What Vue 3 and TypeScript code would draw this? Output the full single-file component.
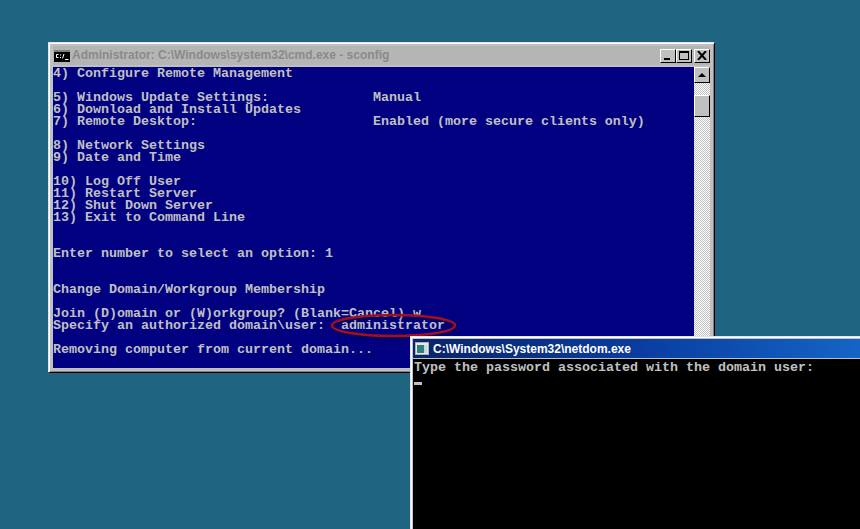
<script setup lang="ts">
const blueLines: string[] = [
  '4) Configure Remote Management',
  '',
  '5) Windows Update Settings:             Manual',
  '6) Download and Install Updates',
  '7) Remote Desktop:                      Enabled (more secure clients only)',
  '',
  '8) Network Settings',
  '9) Date and Time',
  '',
  '10) Log Off User',
  '11) Restart Server',
  '12) Shut Down Server',
  '13) Exit to Command Line',
  '',
  '',
  'Enter number to select an option: 1',
  '',
  '',
  'Change Domain/Workgroup Membership',
  '',
  'Join (D)omain or (W)orkgroup? (Blank=Cancel) w',
  'Specify an authorized domain\\user:  administrator',
  '',
  'Removing computer from current domain...',
]
</script>

<template>
  <div class="desktop">
    <section class="win win-back">
      <header class="title title-inactive">
        <svg class="icon" width="16" height="12" viewBox="0 0 16 12">
          <rect width="16" height="12" fill="#000" />
          <rect x="0" y="0" width="16" height="2" fill="#808080" />
          <path d="M4.500 4.500h-2v3h2M6.500 4.500v1M6.500 7v1M10 4l-1.500 4.500M11 9.500h3.500" stroke="#fff" stroke-width="1" fill="none" />
        </svg>
        <span class="title-text">Administrator: C:\Windows\system32\cmd.exe - sconfig</span>
        <span class="btn"><i class="min"></i></span>
        <span class="btn"><i class="max"></i></span>
        <span class="btn btn-close">
          <svg width="10" height="9" viewBox="0 0 10 9"><path d="M1 0l8 9M9 0l-8 9" stroke="#000" stroke-width="2" fill="none" /></svg>
        </span>
      </header>
      <div class="body">
        <pre class="console console-blue">{{ blueLines.join('\n') }}</pre>
        <div class="scroll">
          <span class="arrow"><i class="tri"></i></span>
          <span class="thumb"></span>
        </div>
      </div>
    </section>

    <svg class="ellipse" width="130" height="30" viewBox="0 0 130 30">
      <ellipse cx="63.500" cy="14.500" rx="61.500" ry="10.500" fill="none" stroke="#a50f1c" stroke-width="2.500" />
    </svg>

    <section class="win win-front">
      <header class="title title-active">
        <svg class="icon" width="14" height="13" viewBox="0 0 14 13">
          <rect x="0.500" y="0.500" width="13" height="12" fill="#e8e8e8" stroke="#a8b4b4" />
          <rect x="2" y="3" width="7" height="8" fill="#2f7f7a" />
          <rect x="9" y="3" width="3" height="8" fill="#cfd6d6" />
        </svg>
        <span class="title-text">C:\Windows\System32\netdom.exe</span>
      </header>
      <pre class="console console-black">Type the password associated with the domain user:
<i class="cursor"></i></pre>
    </section>
  </div>
</template>

<style>
html, body { margin: 0; background: #1f6480; }
</style>

<style scoped>
.desktop {
  position: relative;
  width: 860px;
  height: 529px;
  overflow: hidden;
  background: #1f6480;
}
.win {
  position: absolute;
  box-sizing: border-box;
  background: #c0c0c0;
  border: 1px solid;
  border-color: #e4e4e4 #000 #000 #e4e4e4;
  box-shadow: inset 1px 1px 0 #fff, inset -1px -1px 0 #808080;
  display: flex;
  flex-direction: column;
}
.win-back { left: 48px; top: 42px; width: 667px; height: 331px; padding: 3px 4px 4px; }
.win-front { left: 410px; top: 336px; width: 470px; height: 220px; padding: 2px; }
.title {
  height: 19px;
  flex: none;
  display: flex;
  align-items: center;
  font: bold 12px "Liberation Sans", Arial, sans-serif;
  white-space: nowrap;
}
.title-inactive { background: #b5b5b5; color: #8a8a8a; padding-left: 1px; }
.title-inactive .title-text { padding-bottom: 2px; }
.title-active {
  background: linear-gradient(90deg, #0a246a, #0a3ca0 48%, #1468c8);
  color: #fff;
  padding-left: 2px;
}
.icon { flex: none; margin-right: 2px; }
.title-active .icon { margin-right: 4px; }
.title-text { flex: 1; min-width: 0; overflow: hidden; }
.btn {
  flex: none;
  box-sizing: border-box;
  width: 16px;
  height: 14px;
  background: #c0c0c0;
  border: 1px solid;
  border-color: #fff #000 #000 #fff;
  display: flex;
  align-items: center;
  justify-content: center;
}
.btn-close { margin-left: 2px; }
.min { width: 6px; height: 2px; background: #000; margin-top: 7px; margin-right: 2px; }
.max { box-sizing: border-box; width: 10px; height: 9px; border: 1px solid #000; border-top-width: 2px; }
.body { flex: 1; min-height: 0; display: flex; margin-top: 2px; }
.console {
  margin: 0;
  font: bold 13.33px/12px "Liberation Mono", "Courier New", monospace;
  white-space: pre;
  overflow: hidden;
}
.console-blue { flex: 1; background: #000080; color: #c0c0c0; padding-top: 1px; }
.console-black { flex: 1; margin-top: 1px; background: #000; color: #c0c0c0; padding: 3px 0 0 1px; }
.cursor { display: inline-block; width: 8px; height: 3px; background: #c0c0c0; vertical-align: -2px; }
.scroll {
  flex: none;
  width: 16px;
  display: flex;
  flex-direction: column;
  background-color: #e0e0e0;
  background-image: conic-gradient(#c0c0c0 25%, #fff 0 50%, #c0c0c0 0 75%, #fff 0);
  background-size: 2px 2px;
}
.arrow, .thumb {
  box-sizing: border-box;
  display: flex;
  align-items: center;
  justify-content: center;
  background: #c0c0c0;
  border: 1px solid;
  border-color: #fff #000 #000 #fff;
}
.arrow { height: 16px; }
.thumb { height: 22px; margin-top: 12px; }
.tri { width: 0; height: 0; border: 4px solid transparent; border-top: 0; border-bottom-color: #000; }
.ellipse { position: absolute; left: 330px; top: 311px; filter: drop-shadow(1px 2px 1px rgba(0,0,0,.3)); }
</style>
